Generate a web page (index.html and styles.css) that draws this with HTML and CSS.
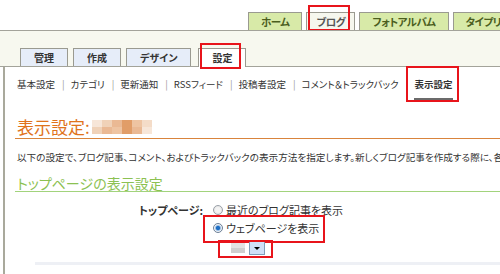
FILE: index.html
```html
<!DOCTYPE html>
<html lang="ja">

<head>
    <meta charset="UTF-8">
    <title>表示設定</title>
    <link rel="stylesheet" href="styles.css">
</head>

<body>
    <!-- Main tabs -->
    <div class="topbar">
        <div class="tab">ホーム</div>
        <div class="tab active">ブログ<span class="mark mark-blog"></span></div>
        <div class="tab">フォトアルバム</div>
        <div class="tab">タイプリスト</div>
    </div>

    <!-- Blog tabs -->
    <div class="subbar">
        <div class="subtab">管理</div>
        <div class="subtab">作成</div>
        <div class="subtab">デザイン</div>
        <div class="subtab active">設定<span class="mark mark-settings"></span></div>
    </div>

    <div class="content">
        <div class="subnav">
            <span>基本設定</span><span class="sep">|</span>
            <span>カテゴリ</span><span class="sep">|</span>
            <span>更新通知</span><span class="sep">|</span>
            <span>RSSフィード</span><span class="sep">|</span>
            <span>投稿者設定</span><span class="sep">|</span>
            <span>コメント＆トラックバック</span>
            <span class="current">表示設定<span class="mark mark-current"></span></span>
        </div>

        <h1 class="title">表示設定:
            <span class="blur">
                <i class="c1"></i><i class="c2"></i><i class="c3"></i><i class="c4"></i><i class="c5"></i><i class="c6"></i>
                <i class="c2"></i><i class="c3"></i><i class="c5"></i><i class="c4"></i><i class="c3"></i><i class="c1"></i>
            </span>
        </h1>

        <p class="intro">以下の設定で、ブログ記事、コメント、およびトラックバックの表示方法を指定します。新しくブログ記事を作成する際に、各記事の表示方法を変更することもできます。</p>

        <h2 class="section">トップページの表示設定</h2>

        <div class="form-row">
            <div class="label">トップページ:</div>
            <div class="options">
                <label class="option"><input type="radio" name="top"> 最近のブログ記事を表示</label>
                <label class="option picked"><input type="radio" name="top" checked> ウェブページを表示<span class="mark mark-web"></span></label>
                <div class="select">
                    <span class="select-value"></span>
                    <span class="select-btn"></span>
                    <span class="mark mark-select"></span>
                </div>
            </div>
        </div>

        <div class="next-box"></div>
    </div>
</body>

</html>
```

FILE: styles.css
```css
/* General styles */
body {
    margin: 0;
    font-family: "Noto Sans CJK JP", sans-serif;
    font-feature-settings: "palt";
    color: #333;
    background: #fff;
    overflow: hidden;
}

/* Red annotation boxes */
.mark {
    position: absolute;
    border: 2px solid #e8141b;
    pointer-events: none;
}

/* Main tabs */
.topbar {
    height: 30px;
    border-bottom: 1px solid #a3a39a;
    display: flex;
    align-items: flex-end;
    gap: 4px;
    padding-left: 248px;
    white-space: nowrap;
    overflow: hidden;
}

.tab {
    position: relative;
    height: 17px;
    line-height: 17px;
    padding: 0 12px;
    background: #d8eaa8;
    border: 1px solid #9a9a90;
    border-bottom: none;
    font-size: 10.5px;
    letter-spacing: -0.5px;
    font-weight: bold;
    color: #4b5e1e;
}

.tab.active {
    padding: 0 9px;
    background: #f6f7ee;
    color: #555;
}

.mark-blog {
    left: 1px;
    right: 4px;
    top: -8px;
    bottom: -1px;
}

/* Blog tabs */
.subbar {
    height: 35px;
    background: #f7f8ef;
    border-bottom: 1px solid #a3a39a;
    display: flex;
    align-items: flex-end;
    gap: 5px;
    padding-left: 20px;
}

.subtab {
    position: relative;
    height: 17px;
    line-height: 17px;
    padding: 0 13px;
    background: #e6edf9;
    border: 1px solid #9a9a90;
    border-bottom: none;
    font-size: 10px;
    font-weight: bold;
    color: #333;
}

.subtab.active {
    background: #fff;
    margin-left: 2px;
    height: 18px;
    margin-bottom: -1px;
}

.mark-settings {
    left: 1px;
    right: 4px;
    top: -6px;
    bottom: -2px;
}

/* Content */
.content {
    margin-left: 3px;
    border-left: 2px solid #a9a99c;
    padding-left: 10px;
    height: 210px;
}

.subnav {
    padding: 9px 0 0 2px;
    font-size: 9.5px;
    line-height: 17px;
    display: flex;
    white-space: nowrap;
}

.sep {
    color: #999;
    margin: 0 6px 0 7px;
}

.current {
    position: relative;
    margin-left: 16px;
    font-weight: bold;
    padding-bottom: 5px;
    border-bottom: 3px solid #6b6b6b;
}

.mark-current {
    left: -8px;
    right: -6px;
    top: -10px;
    bottom: -4px;
}

.title {
    margin: 15px 0 0;
    padding: 0 0 0 2px;
    font-size: 17px;
    line-height: 22px;
    font-weight: normal;
    color: #e0731c;
    border-bottom: 1px solid #d9843c;
    display: flex;
    align-items: center;
}

.blur {
    display: grid;
    grid-template-columns: repeat(6, 10px);
    grid-auto-rows: 7px;
    margin-left: 2px;
}

.blur i { display: block; }
.blur .c1 { background: #f7e6d8; }
.blur .c2 { background: #f0d2b8; }
.blur .c3 { background: #eab994; }
.blur .c4 { background: #e19d68; }
.blur .c5 { background: #eec4a2; }
.blur .c6 { background: #f4dcc8; }

.intro {
    margin: 11px 0 0;
    padding-left: 2px;
    font-size: 9.6px;
    line-height: 14px;
    white-space: nowrap;
    overflow: hidden;
}

.section {
    margin: 11px 0 0;
    padding-left: 2px;
    font-size: 14px;
    line-height: 16px;
    font-weight: normal;
    color: #8cc152;
    border-bottom: 1px solid #a2d37c;
}

/* Form */
.form-row {
    display: flex;
    margin-top: 9px;
    font-size: 11px;
}

.label {
    width: 188px;
    text-align: right;
    font-weight: bold;
    line-height: 18px;
}

.options {
    padding-left: 10px;
    display: flex;
    flex-direction: column;
    align-items: flex-start;
}

.option {
    position: relative;
    display: flex;
    align-items: center;
    line-height: 18px;
    gap: 3px;
}

.option input {
    appearance: none;
    width: 10px;
    height: 10px;
    margin: 0;
    border: 1px solid #9aa0a8;
    border-radius: 50%;
    background: radial-gradient(circle, #f4f4f4 40%, #d8d8d8);
}

.option input:checked {
    background: radial-gradient(circle, #1f6fc4 30%, #9cc0e6 45%, #eef2f6 60%);
    border-color: #6d7f96;
}

.mark-web {
    left: -10px;
    right: -6px;
    top: -4px;
    bottom: -6px;
}

.select {
    position: relative;
    display: flex;
    align-items: center;
    width: 46px;
    height: 14px;
    margin: 4px 0 0 7px;
    padding-left: 4px;
}

.select-value {
    width: 14px;
    height: 10px;
    background: linear-gradient(#e3e3e3 50%, #cfcfcf 50%);
    margin-left: 7px;
}

.select-btn {
    margin-left: 4px;
    width: 14px;
    height: 12px;
    border: 1px solid #7f9db9;
    background: #cfdff7;
    position: relative;
}

.select-btn::after {
    content: "";
    position: absolute;
    left: 4px;
    top: 5px;
    border-left: 3px solid transparent;
    border-right: 3px solid transparent;
    border-top: 3px solid #000;
}

.mark-select {
    left: -2px;
    right: -3px;
    top: -1px;
    bottom: -3px;
}

.next-box {
    margin: 7px 0 0 20px;
    height: 3px;
    background: #eef0f5;
}
```
